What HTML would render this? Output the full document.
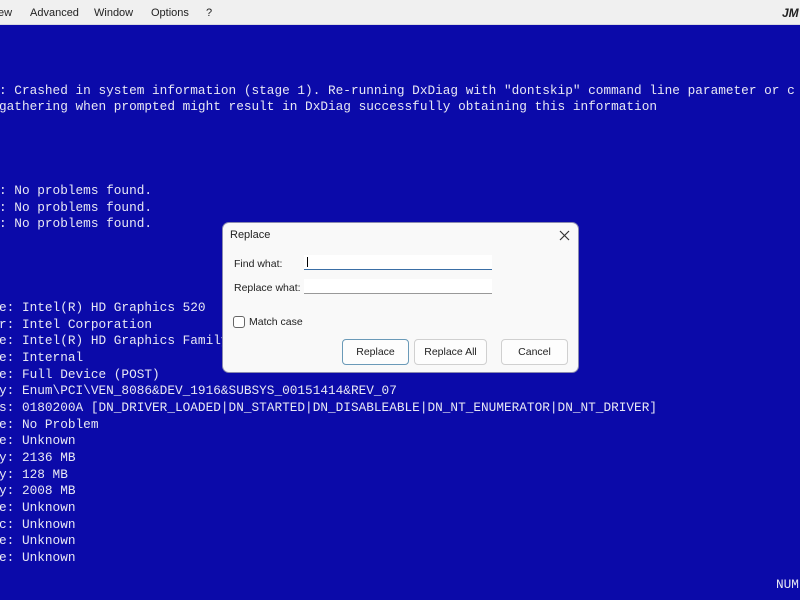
<!DOCTYPE html>
<html><head><meta charset="utf-8"><style>
*{margin:0;padding:0;box-sizing:border-box}
body{width:800px;height:600px;overflow:hidden;background:#0b0aa9;position:relative;font-family:"Liberation Sans",sans-serif}
#menu{position:absolute;left:0;top:0;width:800px;height:25px;background:#f0f0f0;border-bottom:1px solid #d8d8e0;font-size:11px;color:#222}
#menu span{position:absolute;top:7px}
.t{position:absolute;left:-1px;font-family:"Liberation Mono",monospace;font-size:12.75px;color:#e8e8f4;white-space:pre;line-height:16.67px}
#dlg{position:absolute;left:222px;top:222px;width:357px;height:151px;background:#f9f9f9;border-radius:7px;border:1px solid #8a8ab0;font-size:10.5px;color:#222}
.l{position:absolute}
.in{position:absolute;left:81px;width:188px;height:15px;background:#fff;border-bottom:1px solid #999}
.b{position:absolute;top:116px;height:26px;background:#fdfdfd;border:1px solid #d0d0d0;border-radius:4px;text-align:center;line-height:24px;font-size:10.5px}
</style></head><body>
<div id="menu"><span style="left:-2px">ew</span><span style="left:30px">Advanced</span><span style="left:94px">Window</span><span style="left:151px">Options</span><span style="left:206px">?</span><span style="left:782px;font-weight:bold;font-style:italic;font-size:12px;top:6px">JM</span></div>
<div class="t" style="top:83px">: Crashed in system information (stage 1). Re-running DxDiag with "dontskip" command line parameter or c</div>
<div class="t" style="top:99px">gathering when prompted might result in DxDiag successfully obtaining this information</div>
<div class="t" style="top:183px">: No problems found.</div>
<div class="t" style="top:200px">: No problems found.</div>
<div class="t" style="top:216px">: No problems found.</div>
<div class="t" style="top:300px">e: Intel(R) HD Graphics 520
r: Intel Corporation
e: Intel(R) HD Graphics Family
e: Internal
e: Full Device (POST)
y: Enum\PCI\VEN_8086&amp;DEV_1916&amp;SUBSYS_00151414&amp;REV_07
s: 0180200A [DN_DRIVER_LOADED|DN_STARTED|DN_DISABLEABLE|DN_NT_ENUMERATOR|DN_NT_DRIVER]
e: No Problem
e: Unknown
y: 2136 MB
y: 128 MB
y: 2008 MB
e: Unknown
c: Unknown
e: Unknown
e: Unknown</div>
<div class="t" style="top:577px;left:776px">NUM</div>
<div id="dlg">
<div class="l" style="left:7px;top:6px;font-size:11px">Replace</div>
<svg class="l" style="left:336px;top:7px" width="11" height="11"><path d="M1 1L10 10M10 1L1 10" stroke="#333" stroke-width="1.2"/></svg>
<div class="l" style="left:11px;top:35px">Find what:</div>
<div class="in" style="top:32px;border-bottom:1px solid #3a6ea5"><div style="position:absolute;left:3px;top:2px;width:1px;height:10px;background:#000"></div></div>
<div class="l" style="left:11px;top:59px">Replace what:</div>
<div class="in" style="top:56px"></div>
<div class="l" style="left:10px;top:93px;width:12px;height:12px;border:1px solid #666;border-radius:3px;background:#fff"></div>
<div class="l" style="left:26px;top:93px">Match case</div>
<div class="b" style="left:119px;width:67px;border-color:#6a9ab8">Replace</div>
<div class="b" style="left:191px;width:73px">Replace All</div>
<div class="b" style="left:278px;width:67px">Cancel</div>
</div>
</body></html>
